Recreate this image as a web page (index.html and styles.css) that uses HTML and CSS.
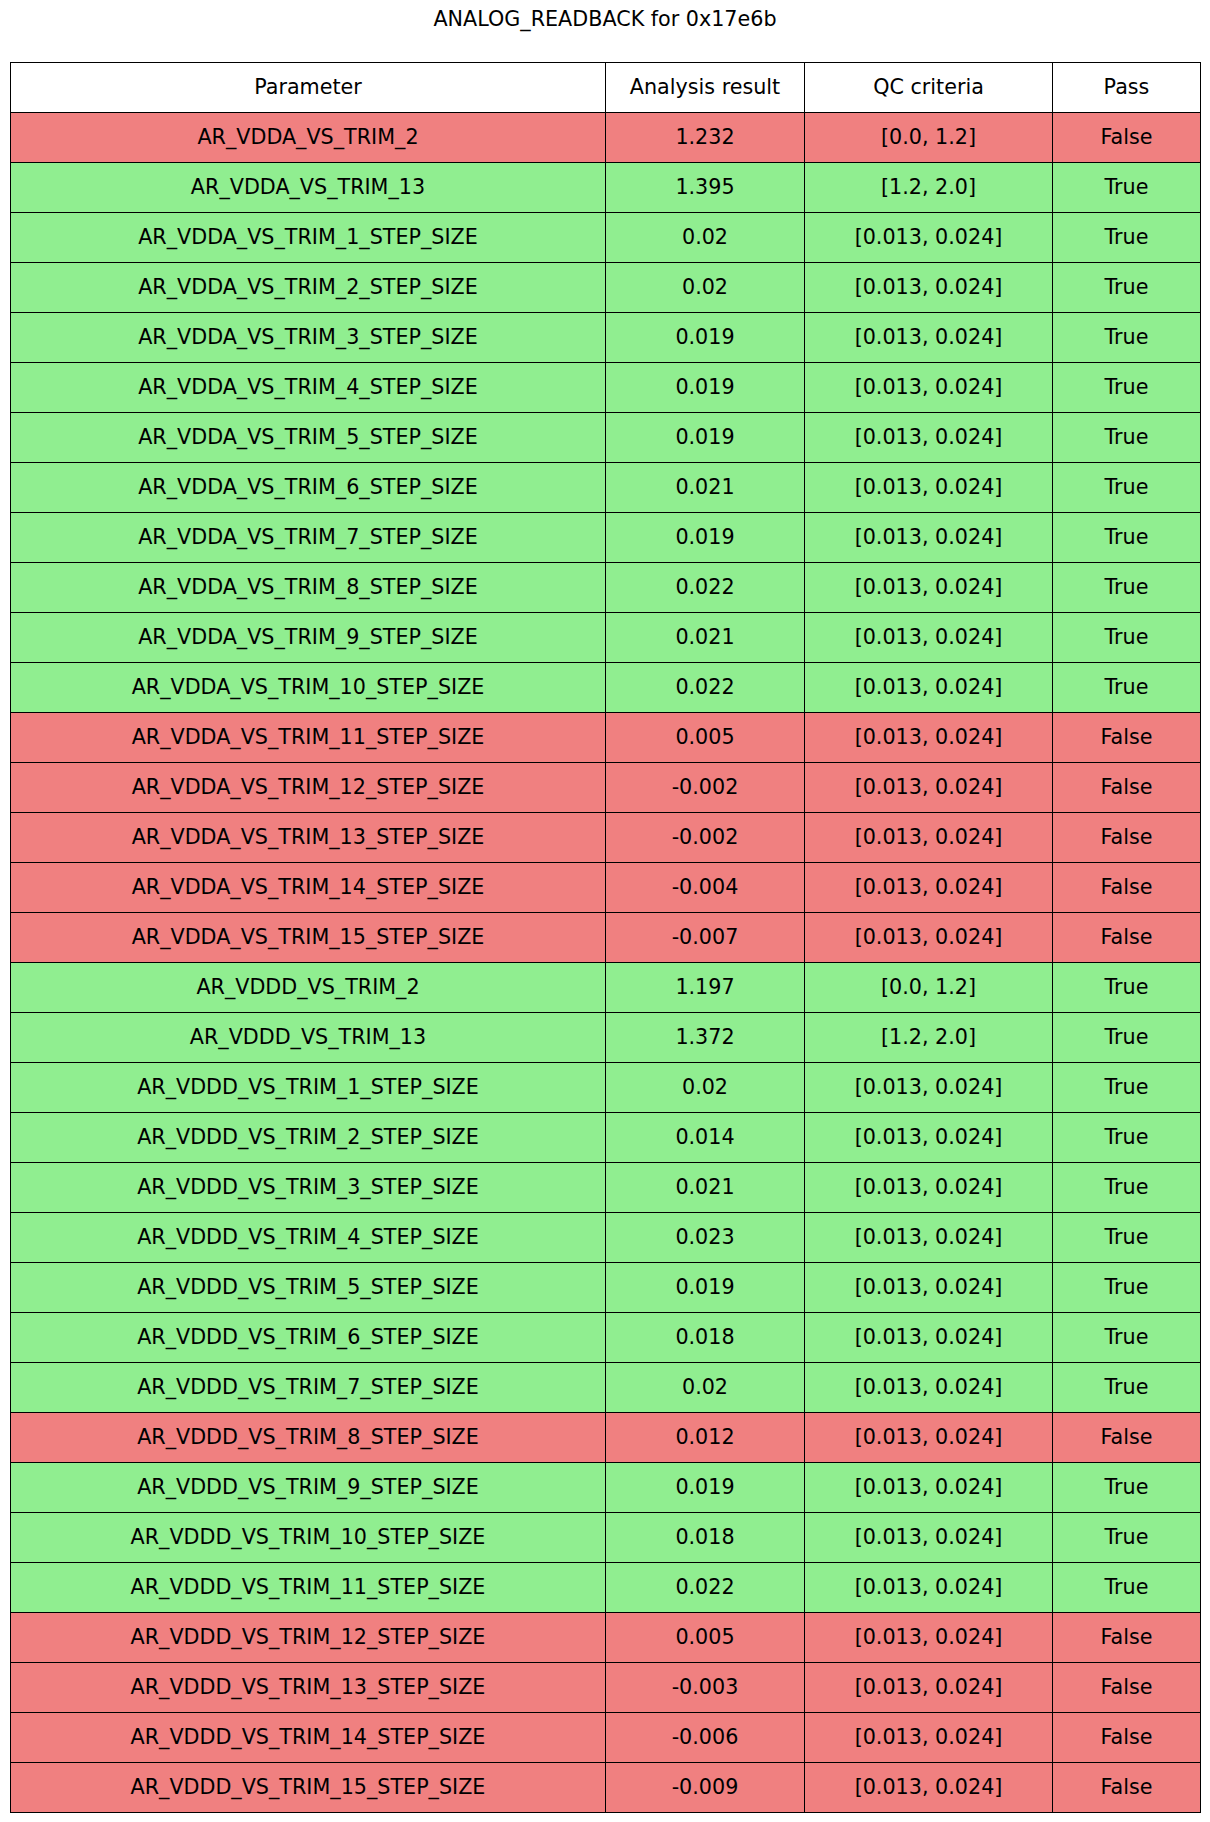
FILE: index.html
```html
<!DOCTYPE html>
<html>
<head>
<meta charset="utf-8">
<link rel="stylesheet" href="styles.css">
</head>
<body>
<div class="page">
  <h1 class="title">ANALOG_READBACK for 0x17e6b</h1>
  <table class="qc">
    <colgroup>
      <col class="c-param"><col class="c-result"><col class="c-crit"><col class="c-pass">
    </colgroup>
    <thead>
      <tr><th>Parameter</th><th>Analysis result</th><th>QC criteria</th><th>Pass</th></tr>
    </thead>
    <tbody>
      <tr class="bad"><td>AR_VDDA_VS_TRIM_2</td><td>1.232</td><td>[0.0, 1.2]</td><td>False</td></tr>
      <tr class="ok"><td>AR_VDDA_VS_TRIM_13</td><td>1.395</td><td>[1.2, 2.0]</td><td>True</td></tr>
      <tr class="ok"><td>AR_VDDA_VS_TRIM_1_STEP_SIZE</td><td>0.02</td><td>[0.013, 0.024]</td><td>True</td></tr>
      <tr class="ok"><td>AR_VDDA_VS_TRIM_2_STEP_SIZE</td><td>0.02</td><td>[0.013, 0.024]</td><td>True</td></tr>
      <tr class="ok"><td>AR_VDDA_VS_TRIM_3_STEP_SIZE</td><td>0.019</td><td>[0.013, 0.024]</td><td>True</td></tr>
      <tr class="ok"><td>AR_VDDA_VS_TRIM_4_STEP_SIZE</td><td>0.019</td><td>[0.013, 0.024]</td><td>True</td></tr>
      <tr class="ok"><td>AR_VDDA_VS_TRIM_5_STEP_SIZE</td><td>0.019</td><td>[0.013, 0.024]</td><td>True</td></tr>
      <tr class="ok"><td>AR_VDDA_VS_TRIM_6_STEP_SIZE</td><td>0.021</td><td>[0.013, 0.024]</td><td>True</td></tr>
      <tr class="ok"><td>AR_VDDA_VS_TRIM_7_STEP_SIZE</td><td>0.019</td><td>[0.013, 0.024]</td><td>True</td></tr>
      <tr class="ok"><td>AR_VDDA_VS_TRIM_8_STEP_SIZE</td><td>0.022</td><td>[0.013, 0.024]</td><td>True</td></tr>
      <tr class="ok"><td>AR_VDDA_VS_TRIM_9_STEP_SIZE</td><td>0.021</td><td>[0.013, 0.024]</td><td>True</td></tr>
      <tr class="ok"><td>AR_VDDA_VS_TRIM_10_STEP_SIZE</td><td>0.022</td><td>[0.013, 0.024]</td><td>True</td></tr>
      <tr class="bad"><td>AR_VDDA_VS_TRIM_11_STEP_SIZE</td><td>0.005</td><td>[0.013, 0.024]</td><td>False</td></tr>
      <tr class="bad"><td>AR_VDDA_VS_TRIM_12_STEP_SIZE</td><td>-0.002</td><td>[0.013, 0.024]</td><td>False</td></tr>
      <tr class="bad"><td>AR_VDDA_VS_TRIM_13_STEP_SIZE</td><td>-0.002</td><td>[0.013, 0.024]</td><td>False</td></tr>
      <tr class="bad"><td>AR_VDDA_VS_TRIM_14_STEP_SIZE</td><td>-0.004</td><td>[0.013, 0.024]</td><td>False</td></tr>
      <tr class="bad"><td>AR_VDDA_VS_TRIM_15_STEP_SIZE</td><td>-0.007</td><td>[0.013, 0.024]</td><td>False</td></tr>
      <tr class="ok"><td>AR_VDDD_VS_TRIM_2</td><td>1.197</td><td>[0.0, 1.2]</td><td>True</td></tr>
      <tr class="ok"><td>AR_VDDD_VS_TRIM_13</td><td>1.372</td><td>[1.2, 2.0]</td><td>True</td></tr>
      <tr class="ok"><td>AR_VDDD_VS_TRIM_1_STEP_SIZE</td><td>0.02</td><td>[0.013, 0.024]</td><td>True</td></tr>
      <tr class="ok"><td>AR_VDDD_VS_TRIM_2_STEP_SIZE</td><td>0.014</td><td>[0.013, 0.024]</td><td>True</td></tr>
      <tr class="ok"><td>AR_VDDD_VS_TRIM_3_STEP_SIZE</td><td>0.021</td><td>[0.013, 0.024]</td><td>True</td></tr>
      <tr class="ok"><td>AR_VDDD_VS_TRIM_4_STEP_SIZE</td><td>0.023</td><td>[0.013, 0.024]</td><td>True</td></tr>
      <tr class="ok"><td>AR_VDDD_VS_TRIM_5_STEP_SIZE</td><td>0.019</td><td>[0.013, 0.024]</td><td>True</td></tr>
      <tr class="ok"><td>AR_VDDD_VS_TRIM_6_STEP_SIZE</td><td>0.018</td><td>[0.013, 0.024]</td><td>True</td></tr>
      <tr class="ok"><td>AR_VDDD_VS_TRIM_7_STEP_SIZE</td><td>0.02</td><td>[0.013, 0.024]</td><td>True</td></tr>
      <tr class="bad"><td>AR_VDDD_VS_TRIM_8_STEP_SIZE</td><td>0.012</td><td>[0.013, 0.024]</td><td>False</td></tr>
      <tr class="ok"><td>AR_VDDD_VS_TRIM_9_STEP_SIZE</td><td>0.019</td><td>[0.013, 0.024]</td><td>True</td></tr>
      <tr class="ok"><td>AR_VDDD_VS_TRIM_10_STEP_SIZE</td><td>0.018</td><td>[0.013, 0.024]</td><td>True</td></tr>
      <tr class="ok"><td>AR_VDDD_VS_TRIM_11_STEP_SIZE</td><td>0.022</td><td>[0.013, 0.024]</td><td>True</td></tr>
      <tr class="bad"><td>AR_VDDD_VS_TRIM_12_STEP_SIZE</td><td>0.005</td><td>[0.013, 0.024]</td><td>False</td></tr>
      <tr class="bad"><td>AR_VDDD_VS_TRIM_13_STEP_SIZE</td><td>-0.003</td><td>[0.013, 0.024]</td><td>False</td></tr>
      <tr class="bad"><td>AR_VDDD_VS_TRIM_14_STEP_SIZE</td><td>-0.006</td><td>[0.013, 0.024]</td><td>False</td></tr>
      <tr class="bad"><td>AR_VDDD_VS_TRIM_15_STEP_SIZE</td><td>-0.009</td><td>[0.013, 0.024]</td><td>False</td></tr>
    </tbody>
  </table>
</div>
</body>
</html>
```

FILE: styles.css
```css
html, body {
  margin: 0;
  padding: 0;
  background: #fff;
}
.page {
  width: 1210px;
  padding: 0 0 0 10px;
  box-sizing: border-box;
  font-family: "DejaVu Sans", sans-serif;
  color: #000;
}
.title {
  margin: 0;
  width: 1190px;
  height: 62px;
  padding-top: 7px;
  box-sizing: border-box;
  text-align: center;
  font-weight: normal;
  font-size: 20.7px;
  line-height: 24px;
}
.qc {
  border-collapse: collapse;
  table-layout: fixed;
  width: 1190px;
  font-size: 20.7px;
}
.c-param { width: 595px; }
.c-result { width: 199px; }
.c-crit { width: 248px; }
.c-pass { width: 148px; }
.qc th, .qc td {
  border: 1px solid #000;
  height: 47px;
  padding: 0 0 2px 0;
  text-align: center;
  vertical-align: middle;
  font-weight: normal;
  white-space: nowrap;
}
.qc th { background: #fff; }
.ok td { background: #90ee90; }
.bad td { background: #f08080; }
```
